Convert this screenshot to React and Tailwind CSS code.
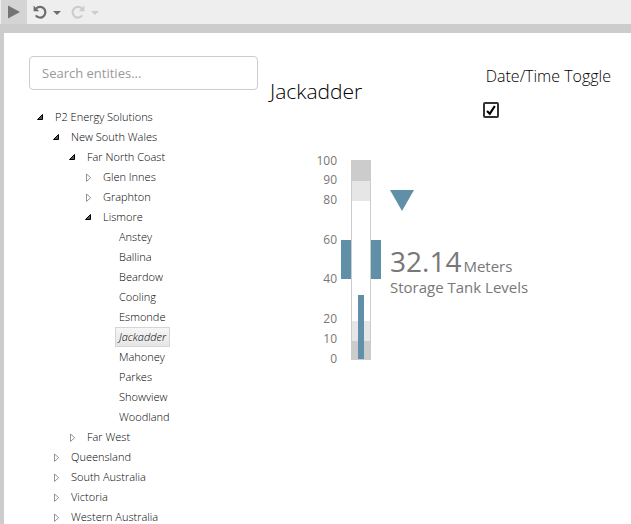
import React, { useState } from "react";

const tree = {
  name: "P2 Energy Solutions",
  open: true,
  children: [
    {
      name: "New South Wales",
      open: true,
      children: [
        {
          name: "Far North Coast",
          open: true,
          children: [
            { name: "Glen Innes", children: [] },
            { name: "Graphton", children: [] },
            {
              name: "Lismore",
              open: true,
              children: [
                { name: "Anstey" },
                { name: "Ballina" },
                { name: "Beardow" },
                { name: "Cooling" },
                { name: "Esmonde" },
                { name: "Jackadder" },
                { name: "Mahoney" },
                { name: "Parkes" },
                { name: "Showview" },
                { name: "Woodland" },
              ],
            },
          ],
        },
        { name: "Far West", children: [] },
      ],
    },
    { name: "Queensland", children: [] },
    { name: "South Australia", children: [] },
    { name: "Victoria", children: [] },
    { name: "Western Australia", children: [] },
  ],
};

function Arrow({ open }) {
  return (
    <svg width="10" height="10" viewBox="0 0 10 10" aria-hidden="true">
      {open ? (
        <path d="M7.5 2.5v5h-5z" fill="#555" stroke="#000" />
      ) : (
        <path d="M3.5 2v7.4L7.7 5.7z" fill="#fff" stroke="#8a8a8a" strokeWidth="0.9" />
      )}
    </svg>
  );
}

function TreeNode({ node, selected, onSelect }) {
  const [open, setOpen] = useState(Boolean(node.open));
  const isSelected = node.name === selected;
  return (
    <li>
      <div className="flex h-5 items-center">
        {node.children ? (
          <button
            type="button"
            aria-label={`Toggle ${node.name}`}
            aria-expanded={open}
            onClick={() => setOpen(!open)}
            className="flex h-5 w-4 items-center"
          >
            <Arrow open={open} />
          </button>
        ) : (
          <span className="w-4" />
        )}
        <button
          type="button"
          onClick={() => onSelect(node.name)}
          className={`h-5 border px-[3px] text-[11px] leading-4 font-light whitespace-nowrap text-black ${
            isSelected
              ? "border-[#d5d5d5] bg-linear-to-b from-[#f6f6f6] to-[#e6e6e6] italic"
              : "border-transparent"
          }`}
        >
          {node.name}
        </button>
      </div>
      {open && node.children?.length > 0 && (
        <ul className="pl-4">
          {node.children.map((child) => (
            <TreeNode key={child.name} node={child} selected={selected} onSelect={onSelect} />
          ))}
        </ul>
      )}
    </li>
  );
}

const ticks = [
  [100, 10],
  [90, 29],
  [80, 49],
  [60, 89],
  [40, 128],
  [20, 168],
  [10, 188],
  [0, 208],
];

function Gauge() {
  return (
    <svg width="76" height="220" viewBox="0 0 76 220" role="img" aria-label="Tank level gauge">
      {ticks.map(([value, y]) => (
        <text key={value} x="32" y={y + 5} textAnchor="end" fontSize="12" fill="#777">
          {value}
        </text>
      ))}
      <rect x="36" y="90" width="40" height="39" fill="#5f90a7" />
      <rect x="46" y="10" width="20" height="200" fill="#ccc" />
      <rect x="47" y="31" width="18" height="160" fill="#e6e6e6" />
      <rect x="47" y="51" width="18" height="120" fill="#fff" />
      <rect x="53" y="145" width="6" height="64" fill="#5f90a7" />
    </svg>
  );
}

function Toolbar() {
  return (
    <header className="flex h-6 bg-[#eee] pl-px">
      <button type="button" aria-label="Run" className="flex w-[26px] items-center bg-[#d4d4d4] pl-[7px]">
        <svg width="12" height="14" viewBox="0 0 12 14">
          <path d="M0 .5v13L12 7z" fill="#747474" />
        </svg>
      </button>
      <button type="button" aria-label="Undo" className="flex w-[38px] items-center gap-[6px] pl-[6px] text-[#6c6c6c]">
        <UndoIcon />
        <Caret />
      </button>
      <button type="button" aria-label="Redo" disabled className="flex w-[38px] items-center gap-[6px] pl-[6px] text-[#ccc]">
        <svg width="14" height="14" viewBox="0 0 14 14" className="-scale-x-100">
          <UndoShape />
        </svg>
        <Caret />
      </button>
    </header>
  );
}

function UndoShape() {
  return (
    <>
      <path d="M3.2 3.6A5.3 5.3 0 1 1 2.8 10.4" fill="none" stroke="currentColor" strokeWidth="2.2" />
      <path d="M.6.6v5.6h5.6z" fill="currentColor" />
    </>
  );
}

function UndoIcon() {
  return (
    <svg width="14" height="14" viewBox="0 0 14 14">
      <UndoShape />
    </svg>
  );
}

function Caret() {
  return (
    <svg width="8" height="4" viewBox="0 0 8 4" className="mt-[2px] shrink-0">
      <path d="M0 0h8L4 4z" fill="currentColor" />
    </svg>
  );
}

export default function App() {
  const [selected, setSelected] = useState("Jackadder");
  const [checked, setChecked] = useState(true);
  return (
    <div className="flex h-screen flex-col overflow-hidden bg-[#ccc] font-['Open_Sans','Noto_Sans',sans-serif] text-[#222]">
      <Toolbar />
      <main className="mt-[9px] ml-1 flex min-h-0 flex-1 bg-white pt-[23px] pl-[25px]">
        <aside className="w-[229px] shrink-0">
          <input
            type="text"
            aria-label="Search entities"
            placeholder="Search entities..."
            className="block h-[34px] w-full rounded border border-[#ccc] px-3 text-[13px] placeholder:text-[#999]"
          />
          <ul className="mt-[17px] pl-[6px]">
            <TreeNode node={tree} selected={selected} onSelect={setSelected} />
          </ul>
        </aside>
        <section className="min-w-0 flex-1 pl-3">
          <div className="flex justify-between pr-5">
            <h1 className="pt-5 text-[21px] leading-[30px] font-light text-black">{selected}</h1>
            <div className="pt-[10px]">
              <label htmlFor="datetime" className="block pl-[3px] text-base leading-5 font-light text-black">
                Date/Time Toggle
              </label>
              <span className="relative mt-4 block size-4">
                <input
                  id="datetime"
                  type="checkbox"
                  checked={checked}
                  onChange={() => setChecked(!checked)}
                  className="block size-4 appearance-none rounded-xs border-2 border-[#333] bg-white"
                />
                {checked && (
                  <svg className="pointer-events-none absolute inset-0" width="16" height="16" viewBox="0 0 16 16">
                    <path d="M4 9l2.8 2.8L11.8 4" fill="none" stroke="#000" strokeWidth="2.2" />
                  </svg>
                )}
              </span>
            </div>
          </div>
          <div className="mt-8 flex gap-[9px] pl-[35px] text-[#777]">
            <Gauge />
            <div className="pt-10">
              <svg width="24" height="21" viewBox="0 0 24 21" className="block">
                <path d="M0 0h24L12 21z" fill="#5f90a7" />
              </svg>
              <div className="mt-8 flex items-baseline gap-[2px]">
                <span className="text-[28px] leading-9">32.14</span>
                <span className="text-[15px] leading-5">Meters</span>
              </div>
              <div className="text-[15px] leading-4">Storage Tank Levels</div>
            </div>
          </div>
        </section>
      </main>
    </div>
  );
}
